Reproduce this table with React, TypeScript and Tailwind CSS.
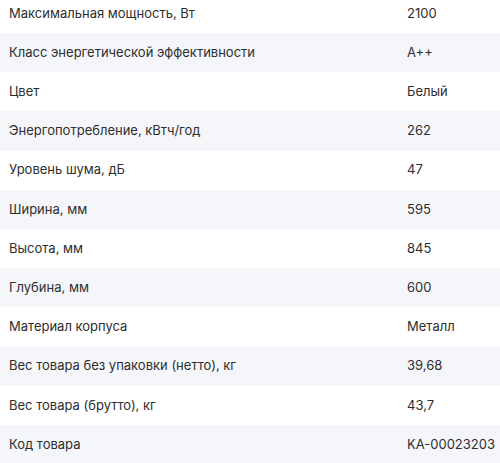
const specs: [string, string][] = [
  ["Максимальная мощность, Вт", "2100"],
  ["Класс энергетической эффективности", "A++"],
  ["Цвет", "Белый"],
  ["Энергопотребление, кВтч/год", "262"],
  ["Уровень шума, дБ", "47"],
  ["Ширина, мм", "595"],
  ["Высота, мм", "845"],
  ["Глубина, мм", "600"],
  ["Материал корпуса", "Металл"],
  ["Вес товара без упаковки (нетто), кг", "39,68"],
  ["Вес товара (брутто), кг", "43,7"],
  ["Код товара", "KA-00023203"],
];

export default function App() {
  return (
    <div className="h-[463px] w-[500px] overflow-hidden bg-white font-['Inter',sans-serif] text-[13px] text-[#2e2e2e]">
      <div className="-mt-[6.2px]">
        {specs.map(([name, value], i) => (
          <div
            key={name}
            className={`flex h-[39.2px] items-center ${i % 2 === 1 ? "bg-[#f5f6fa]" : "bg-white"}`}
          >
            <div className="w-[407px] pl-[9px]">{name}</div>
            <div className="flex-1">{value}</div>
          </div>
        ))}
      </div>
    </div>
  );
}
